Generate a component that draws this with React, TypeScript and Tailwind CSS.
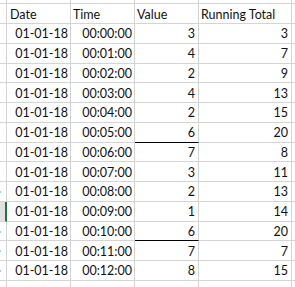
import React from "react";

const rows: [string, number, number][] = [
  ["00:00:00", 3, 3],
  ["00:01:00", 4, 7],
  ["00:02:00", 2, 9],
  ["00:03:00", 4, 13],
  ["00:04:00", 2, 15],
  ["00:05:00", 6, 20],
  ["00:06:00", 7, 8],
  ["00:07:00", 3, 11],
  ["00:08:00", 2, 13],
  ["00:09:00", 1, 14],
  ["00:10:00", 6, 20],
  ["00:11:00", 7, 7],
  ["00:12:00", 8, 15],
];

const cell = "flex items-end border-r border-b border-[#d4d4d4] pb-[2px] leading-none";

function Row({ cells, h = "h-[19.75px]", rowHead }: { cells: React.ReactNode[]; h?: string; rowHead?: React.ReactNode }) {
  return (
    <div className={`flex ${h} shrink-0`}>
      {rowHead ?? <div className={`${cell} w-[7px]`} />}
      {cells}
      <div className={`${cell} flex-1 border-r-0`} />
    </div>
  );
}

export default function App() {
  const blank = [
    <div key="a" className={`${cell} w-[64px]`} />,
    <div key="b" className={`${cell} w-[64px]`} />,
    <div key="c" className={`${cell} w-[64px]`} />,
    <div key="d" className={`${cell} w-[93px]`} />,
  ];
  return (
    <div className="flex h-[287px] w-[295px] flex-col overflow-hidden bg-white font-['Lato',sans-serif] text-[12.5px] text-[#111]">
      <Row h="h-[4px]" cells={blank} />
      <Row
        h="h-[20px]"
        cells={[
          <div key="a" className={`${cell} w-[64px] pl-[3px]`}>Date</div>,
          <div key="b" className={`${cell} w-[64px] pl-[2px]`}>Time</div>,
          <div key="c" className={`${cell} w-[64px] pl-[2px]`}>Value</div>,
          <div key="d" className={`${cell} w-[93px] pl-[2px]`}>Running Total</div>,
        ]}
      />
      {rows.map(([t, v, r], i) => {
        const sel = i === 9;
        const thick = i === 5 || i === 10;
        const blue = i === 8 || i >= 10;
        return (
          <Row
            key={t}
            rowHead={
              <div
                className={`relative w-[7px] border-b border-r ${
                  sel ? "border-b-[#d4d4d4] border-r-[#217346] border-r-2 bg-[#e1e1e1]" : "border-[#d4d4d4]"
                }`}
              >
                {blue && <span className="absolute left-0 top-[9px] h-[2px] w-[1px] bg-[#a9cdf0]" />}
              </div>
            }
            cells={[
              <div key="a" className={`${cell} w-[64px] justify-end pr-[2px]`}>01-01-18</div>,
              <div key="b" className={`${cell} w-[64px] justify-end pr-[2px]`}>{t}</div>,
              <div
                key="c"
                className={`${cell} w-[64px] justify-end pr-[3px] ${thick ? "border-b-black" : ""}`}
              >
                {v}
              </div>,
              <div key="d" className={`${cell} w-[93px] justify-end pr-[3px]`}>{r}</div>,
            ]}
          />
        );
      })}
      <Row cells={blank} />
    </div>
  );
}
